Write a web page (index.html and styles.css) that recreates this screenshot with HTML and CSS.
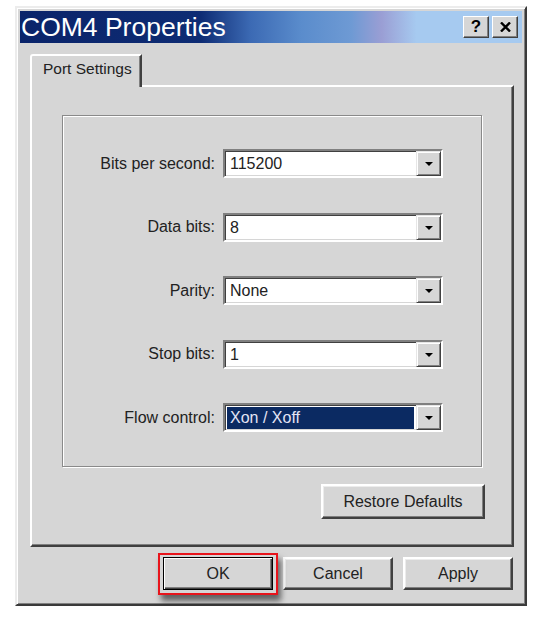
FILE: index.html
```html
<!DOCTYPE html>
<html>
<head>
<meta charset="utf-8">
<title>COM4 Properties</title>
<link rel="stylesheet" href="styles.css">
</head>
<body>
<div class="window">
  <div class="titlebar">
    <span class="title">COM4 Properties</span>
    <div class="title-buttons">
      <span class="tbtn help">?</span>
      <span class="tbtn close"><svg width="11" height="10" viewBox="0 0 11 10"><path d="M1 0.5 L10 9.5 M10 0.5 L1 9.5" stroke="#000" stroke-width="2.4"/></svg></span>
    </div>
  </div>
  <div class="tabs"><div class="tab">Port Settings</div></div>
  <div class="panel">
    <div class="group">
      <div class="row"><span class="label">Bits per second:</span><div class="combo"><span class="value">115200</span><span class="arrow"><i class="tri"></i></span></div></div>
      <div class="row"><span class="label">Data bits:</span><div class="combo"><span class="value">8</span><span class="arrow"><i class="tri"></i></span></div></div>
      <div class="row"><span class="label">Parity:</span><div class="combo"><span class="value">None</span><span class="arrow"><i class="tri"></i></span></div></div>
      <div class="row"><span class="label">Stop bits:</span><div class="combo"><span class="value">1</span><span class="arrow"><i class="tri"></i></span></div></div>
      <div class="row"><span class="label">Flow control:</span><div class="combo"><span class="value selected">Xon / Xoff</span><span class="arrow"><i class="tri"></i></span></div></div>
    </div>
    <div class="restore-row"><button class="btn restore">Restore Defaults</button></div>
  </div>
  <div class="actions">
    <button class="btn default">OK</button>
    <button class="btn">Cancel</button>
    <button class="btn">Apply</button>
  </div>
</div>
</body>
</html>
```
FILE: styles.css
```css
* { box-sizing: border-box; }
html, body { margin: 0; padding: 0; background: #fff; }
body { font-family: "Liberation Sans", Arial, sans-serif; color: #222; }

.window {
  margin: 6px 0 0 15px;
  width: 512px;
  height: 600px;
  background: #d6d6d6;
  border: 2px solid;
  border-color: #ececec #3a3a3a #3a3a3a #ececec;
  box-shadow: inset 1px 1px #fff, inset -1px -1px #808080;
  padding: 3px;
  display: flex;
  flex-direction: column;
}

.titlebar {
  height: 32px;
  background: linear-gradient(to right, #0a246a 0%, #0e2c74 36%, #3c6ab4 46%, #5a8ccc 56%, #6e9ad4 66%, #9a9ed4 72%, #a6caf0 79%, #a6caf0 100%);
  display: flex;
  align-items: center;
  justify-content: space-between;
  padding: 0 4px 0 1px;
}
.title { color: #fff; font-size: 26.5px; line-height: 32px; }
.title-buttons { display: flex; gap: 3px; }
.tbtn {
  width: 26px;
  height: 22px;
  background: #d6d6d6;
  border: 1px solid;
  border-color: #fff #404040 #404040 #fff;
  box-shadow: inset -1px -1px #808080;
  display: flex;
  align-items: center;
  justify-content: center;
  font: bold 17px "Liberation Sans", Arial, sans-serif;
  color: #000;
}

.tabs { display: flex; margin: 11px 0 0 10px; position: relative; z-index: 1; }
.tab {
  height: 33px;
  width: 112px;
  margin-bottom: -2px;
  background: #d6d6d6;
  border: 2px solid;
  border-bottom: none;
  border-color: #fff #404040 transparent #fff;
  box-shadow: inset -1px 0 #808080;
  border-radius: 3px 0 0 0;
  padding: 3px 0 0 11px;
  font-size: 15.5px;
  line-height: 20px;
}

.panel {
  margin-left: 10px;
  width: 484px;
  height: 462px;
  border: 2px solid;
  border-color: #fff #404040 #404040 #fff;
  box-shadow: inset -1px -1px #808080;
  padding: 28px 0 0 30px;
  display: flex;
  flex-direction: column;
}

.group {
  width: 420px;
  height: 352px;
  border: 1px solid #8a8a8a;
  box-shadow: 1px 1px #fff, inset 1px 1px #fff;
  padding-top: 33px;
  display: flex;
  flex-direction: column;
  gap: 34.5px;
}
.row {
  display: grid;
  grid-template-columns: 152px 220px;
  column-gap: 8px;
  align-items: center;
}
.label { text-align: right; font-size: 16px; }

.combo {
  height: 29px;
  border: 2px solid;
  border-color: #808080 #fff #fff #808080;
  box-shadow: inset 1px 1px #404040, inset -1px -1px #d6d6d6;
  background: #fff;
  display: flex;
  padding: 1px 0 0 1px;
}
.value {
  flex: 1;
  margin: 1px 2px 1px 1px;
  padding-left: 3px;
  font-size: 16px;
  line-height: 22px;
  color: #222;
}
.value.selected { background: #0b2a62; color: #e4e4f4; }
.arrow {
  width: 25px;
  height: 25px;
  margin: -1px 0 0 0;
  background: #d6d6d6;
  border: 1px solid;
  border-color: #e6e6e6 #404040 #404040 #e6e6e6;
  box-shadow: inset 1px 1px #fff, inset -1px -1px #808080;
  display: flex;
  align-items: center;
  justify-content: center;
}
.tri {
  width: 0;
  height: 0;
  border-left: 4px solid transparent;
  border-right: 4px solid transparent;
  border-top: 4px solid #000;
  margin-top: 1px;
}

.restore-row { display: flex; justify-content: flex-end; margin: 17px 27px 0 0; }

.btn {
  font: 16px "Liberation Sans", Arial, sans-serif;
  color: #222;
  background: #d6d6d6;
  width: 110px;
  height: 33px;
  border: 2px solid;
  border-color: #fff #404040 #404040 #fff;
  box-shadow: inset -1px -1px #808080, inset 1px 1px #ececec;
  padding: 0;
  margin: 0;
}
.btn.restore { width: 164px; height: 35px; }

.actions {
  display: flex;
  justify-content: flex-end;
  gap: 10px;
  margin-top: 10px;
  padding-right: 9px;
}
.btn.default {
  position: relative;
  border: 1px solid #000;
  box-shadow: inset 1px 1px #fff, inset -1px -1px #404040, inset -2px -2px #808080;
}
.btn.default::after {
  content: "";
  position: absolute;
  left: -6px;
  top: -5px;
  right: -6px;
  bottom: -6px;
  border: 2px solid #e8141b;
  box-shadow: 3px 6px 6px rgba(0, 0, 0, 0.55);
  pointer-events: none;
}
```
